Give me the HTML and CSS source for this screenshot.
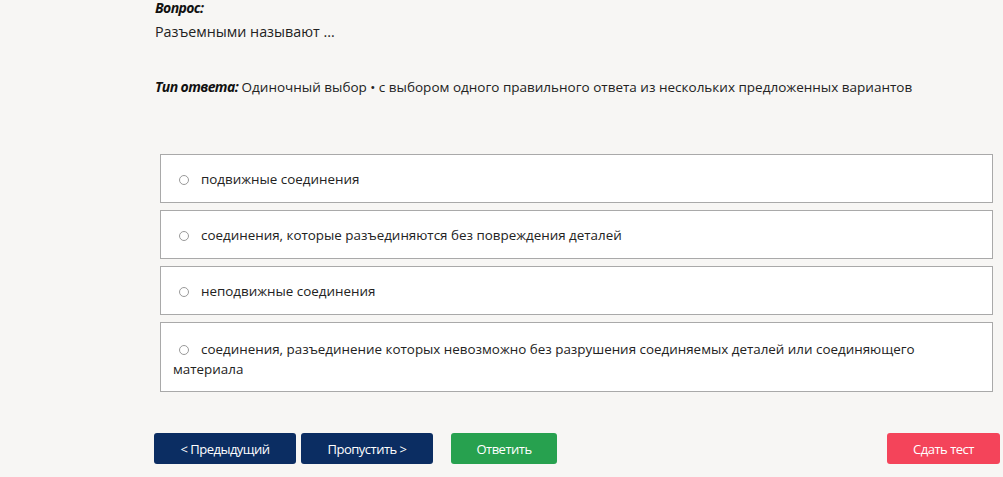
FILE: index.html
```html
<!DOCTYPE html>
<html lang="ru">
<head>
  <meta charset="UTF-8" />
  <title>Тест</title>
  <link rel="stylesheet" href="styles.css">
</head>
<body>

<main class="quiz">
  <div class="question">
    <div class="label">Вопрос:</div>
    <p class="text">Разъемными называют ...</p>
  </div>

  <p class="type"><span class="label">Тип ответа:</span> Одиночный выбор • с выбором одного правильного ответа из нескольких предложенных вариантов</p>

  <div class="options">
    <label class="option"><span class="radio"></span>подвижные соединения</label>
    <label class="option"><span class="radio"></span>соединения, которые разъединяются без повреждения деталей</label>
    <label class="option"><span class="radio"></span>неподвижные соединения</label>
    <label class="option"><span class="radio"></span>соединения, разъединение которых невозможно без разрушения соединяемых деталей или соединяющего материала</label>
  </div>

  <div class="actions">
    <button class="btn btn-nav">&lt; Предыдущий</button>
    <button class="btn btn-nav btn-skip">Пропустить &gt;</button>
    <button class="btn btn-ok">Ответить</button>
    <button class="btn btn-end">Сдать тест</button>
  </div>
</main>

</body>
</html>
```

FILE: styles.css
```css
* {
  margin: 0; padding: 0; box-sizing: border-box;
}
body {
  background: #f7f6f4;
  color: #222;
  font-family: 'Open Sans', 'Noto Sans', sans-serif;
  font-size: 13.5px;
}

.quiz {
  padding: 0 3px 0 155px;
}

.label {
  font-style: italic;
  font-weight: 700;
  font-size: 14px;
  letter-spacing: -0.6px;
  color: #111;
}
.question .label {
  line-height: 16px;
}
.question .text {
  margin-top: 6px;
  line-height: 20px;
  font-size: 14.3px;
}
.type {
  margin-top: 35px;
  line-height: 20px;
}

.options {
  margin: 57px 7px 0 5px;
  display: flex;
  flex-direction: column;
  gap: 7px;
  font-size: 13.4px;
}
.option {
  display: block;
  background: #fff;
  border: 1px solid #a9a9a9;
  padding: 16px 12px 14px 12px;
  line-height: 17px;
  color: #222;
}
.option:last-child {
  padding-top: 16px;
  padding-bottom: 12px;
  line-height: 20px;
}
.radio {
  display: inline-block;
  width: 10px;
  height: 10px;
  border: 1px solid #9a9a9a;
  border-radius: 50%;
  margin: 0 12px 0 6px;
  vertical-align: -1px;
}

.actions {
  margin: 41px 0 0 -1px;
  display: flex;
  gap: 5px;
}
.btn {
  height: 31px;
  border: none;
  border-radius: 3px;
  color: #fff;
  font-family: 'Open Sans', 'Noto Sans', sans-serif;
  font-size: 13px;
  letter-spacing: -0.5px;
}
.btn-nav {
  background: #0b2d62;
  width: 142px;
}
.btn-skip {
  width: 132px;
}
.btn-ok {
  background: #27a14f;
  width: 106px;
  margin-left: 13px;
}
.btn-end {
  background: #f4445a;
  width: 113px;
  margin-left: auto;
}
```
